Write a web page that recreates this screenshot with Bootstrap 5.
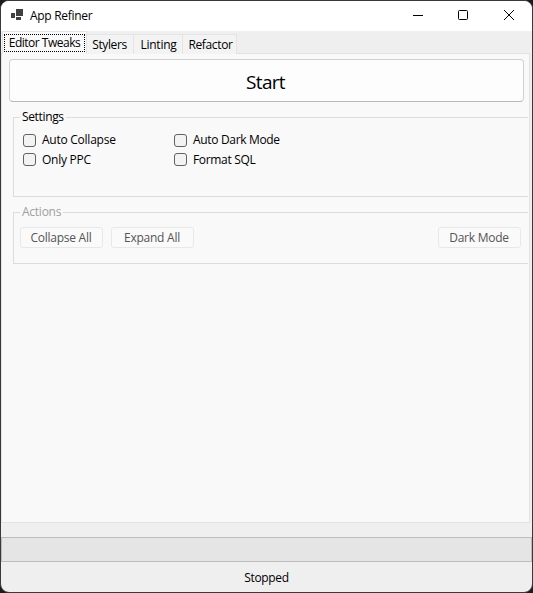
<!DOCTYPE html>
<html lang="en">
<head>
<meta charset="utf-8">
<title>App Refiner</title>
<link href="https://cdn.jsdelivr.net/npm/bootstrap@5.3.0/dist/css/bootstrap.min.css" rel="stylesheet">
<style>
html{background:#1c1b1d}
body{font:12px/16px "Open Sans","Noto Sans",sans-serif;letter-spacing:-.25px;color:#000;background:#1c1b1d;width:533px;height:593px;overflow:hidden;white-space:nowrap}
.app-window{height:593px;border:1px solid #39383a;border-radius:9px;background:#efefef;overflow:hidden}
.title-bar{height:30px;background:#fff;padding-left:10px}
.title-bar .caption{margin-left:6px;letter-spacing:-.3px}
.title-bar .app-icon{margin-top:-2px}
.win-ctl{width:46px;height:30px;border:0;background:none;padding:0}
.tab-strip{height:22px;padding-left:1px;position:relative;z-index:1}
.tab-strip .nav-link{color:#000;padding:0;border:1px solid #e4e4e4;border-left-width:0;border-bottom:0;border-radius:0;background:#f3f3f3;height:20px;line-height:19px;text-align:center}
.tab-strip .nav-link.active{width:85px;height:23px;background:#f9f9f9;padding:2px 1px 3px 1px;border-width:1px 1px 0;margin-bottom:-1px;border-color:#e4e4e4}
.focus-box{border:1px dotted #000;height:18px;line-height:15px;display:block;letter-spacing:-.5px}
.tab-strip .t-stylers{width:47px;letter-spacing:-.4px;padding-right:1px}
.tab-strip .t-linting{width:49px;padding-left:1px}
.tab-strip .t-refactor{width:54px;padding-left:2px;letter-spacing:-.35px}
.page-pane{height:470px;width:529px;background:#f9f9f9;border:1px solid #e2e2e2;padding:5px 0 0 7px}
.btn-start{width:515px;height:43px;background:#fdfdfd;border:1px solid #d0d0d0;border-bottom-color:#b8b8b8;border-radius:4px;font-size:19px;letter-spacing:-.7px;padding:1px 2px 0 0;line-height:42px;color:#000}
.group-box{border:1px solid #dcdcdc;border-right:0;margin-left:4px;width:515px}
.group-box .group-title{height:16px;line-height:16px;margin:-9px 0 0 6px;background:#f9f9f9;padding:0 2px;width:max-content}
.g-settings{height:80px;margin-top:15px}
.g-settings .group-title{letter-spacing:-.35px}
.g-actions{height:52px;margin-top:15px;color:#a0a0a0}
.checks{padding-left:9px;grid-template-columns:151px 1fr;grid-auto-rows:20px;margin-top:5px}
.checks .label-tight{letter-spacing:-.33px}
.form-check-input.tick{width:13px;height:13px;margin:0 6px 0 0;border:1px solid #626262;border-radius:3px;background:#f3f3f3;float:none}
.row-two{margin-top:-1px}
.btn-act{width:83px;height:21px;border:1px solid #e8e8e8;border-radius:3px;background:#fafafa;color:#555;font-size:12px;line-height:19px;padding:0 1px 0 0;letter-spacing:-.25px}
.actions-row{padding:7px 7px 0 6px;gap:8px}
.progress.bar-track{height:25px;margin-top:14px;border:1px solid #bcbcbc;border-radius:0;background:#e5e5e5}
.status-line{height:29px;line-height:31px;letter-spacing:-.35px}
</style>
<script src="https://cdn.jsdelivr.net/npm/bootstrap@5.3.0/dist/js/bootstrap.bundle.min.js"></script>
</head>
<body>
<div class="app-window d-flex flex-column">
  <header class="title-bar d-flex align-items-center">
    <svg class="app-icon" width="13" height="12" viewBox="0 0 13 12" fill="#404040" shape-rendering="crispEdges"><path d="M0 4h4v5H0zM5 0h7v7H5zM5 8h5v3H5z"/></svg>
    <span class="caption">App Refiner</span>
    <div class="d-flex ms-auto me-0">
      <button class="win-ctl" aria-label="Minimize"><svg width="46" height="30" class="d-block" fill="none" stroke="#000"><path d="M19 14.5h10"/></svg></button>
      <button class="win-ctl" aria-label="Maximize"><svg width="46" height="30" class="d-block" fill="none" stroke="#000"><rect x="18.5" y="9.5" width="9" height="9" rx="1"/></svg></button>
      <button class="win-ctl" aria-label="Close"><svg width="46" height="30" class="d-block" fill="none" stroke="#000"><path d="m18 9 10 10M28 9 18 19"/></svg></button>
    </div>
  </header>
  <ul class="nav nav-tabs border-0 tab-strip align-items-end flex-nowrap">
    <li class="nav-item"><a class="nav-link active"><span class="focus-box">Editor Tweaks</span></a></li>
    <li class="nav-item"><a class="nav-link t-stylers">Stylers</a></li>
    <li class="nav-item"><a class="nav-link t-linting">Linting</a></li>
    <li class="nav-item"><a class="nav-link t-refactor">Refactor</a></li>
  </ul>
  <main class="page-pane">
    <button class="btn btn-start d-block">Start</button>
    <section class="group-box g-settings">
      <div class="group-title">Settings</div>
      <div class="checks d-grid">
        <label class="d-flex align-items-center"><input type="checkbox" class="form-check-input tick">Auto Collapse</label>
        <label class="d-flex align-items-center label-tight"><input type="checkbox" class="form-check-input tick">Auto Dark Mode</label>
        <label class="d-flex align-items-center row-two"><input type="checkbox" class="form-check-input tick">Only PPC</label>
        <label class="d-flex align-items-center row-two label-tight"><input type="checkbox" class="form-check-input tick">Format SQL</label>
      </div>
    </section>
    <section class="group-box g-actions">
      <div class="group-title">Actions</div>
      <div class="actions-row d-flex">
        <button class="btn btn-act">Collapse All</button>
        <button class="btn btn-act">Expand All</button>
        <button class="btn btn-act ms-auto">Dark Mode</button>
      </div>
    </section>
  </main>
  <div class="progress bar-track"></div>
  <footer class="status-line text-center">Stopped</footer>
</div>
</body>
</html>
